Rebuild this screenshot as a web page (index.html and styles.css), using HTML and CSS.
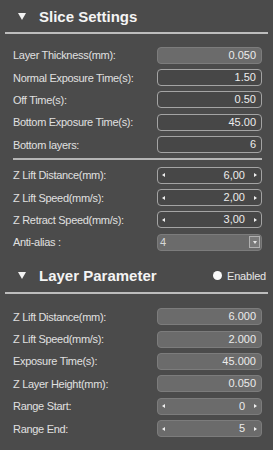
FILE: index.html
```html
<!DOCTYPE html>
<html>
  <head>
    <title>Slice Settings</title>
    <link rel="stylesheet" href="styles.css">
  </head>
  <body>
    <div id="panel">
      <div class="section_head">
        <svg class="caret" width="8" height="7" viewBox="0 0 8 7"><polygon points="0,0 8,0 4,7" fill="#f2f2f2"/></svg>
        <h2>Slice Settings</h2>
      </div>
      <div class="rule"></div>

      <div class="fields first">
        <div class="field"><span class="label">Layer Thickness(mm):</span><div class="box off">0.050</div></div>
        <div class="field"><span class="label">Normal Exposure Time(s):</span><div class="box">1.50</div></div>
        <div class="field"><span class="label">Off Time(s):</span><div class="box">0.50</div></div>
        <div class="field"><span class="label">Bottom Exposure Time(s):</span><div class="box">45.00</div></div>
        <div class="field"><span class="label">Bottom layers:</span><div class="box">6</div></div>
      </div>

      <div class="rule thin"></div>

      <div class="fields">
        <div class="field"><span class="label">Z Lift Distance(mm):</span><div class="box spin"><i class="arrow left"></i><span class="val">6,00</span><i class="arrow right"></i></div></div>
        <div class="field"><span class="label">Z Lift Speed(mm/s):</span><div class="box spin"><i class="arrow left"></i><span class="val">2,00</span><i class="arrow right"></i></div></div>
        <div class="field"><span class="label">Z Retract Speed(mm/s):</span><div class="box spin"><i class="arrow left"></i><span class="val">3,00</span><i class="arrow right"></i></div></div>
        <div class="field"><span class="label">Anti-alias :</span><div class="box off combo"><span class="val">4</span><span class="drop"><i></i></span></div></div>
      </div>

      <div class="section_head second">
        <svg class="caret" width="8" height="7" viewBox="0 0 8 7"><polygon points="0,0 8,0 4,7" fill="#f2f2f2"/></svg>
        <h2>Layer Parameter</h2>
        <span class="radio"><i class="dot"></i>Enabled</span>
      </div>
      <div class="rule"></div>

      <div class="fields last">
        <div class="field"><span class="label">Z Lift Distance(mm):</span><div class="box off">6.000</div></div>
        <div class="field"><span class="label">Z Lift Speed(mm/s):</span><div class="box off">2.000</div></div>
        <div class="field"><span class="label">Exposure Time(s):</span><div class="box off">45.000</div></div>
        <div class="field"><span class="label">Z Layer Height(mm):</span><div class="box off">0.050</div></div>
        <div class="field"><span class="label">Range Start:</span><div class="box off spin"><i class="arrow left"></i><span class="val">0</span><i class="arrow right"></i></div></div>
        <div class="field"><span class="label">Range End:</span><div class="box off spin"><i class="arrow left"></i><span class="val">5</span><i class="arrow right"></i></div></div>
      </div>
    </div>
  </body>
</html>
```

FILE: styles.css
```css
body {
  margin: 0;
  background: #4b4b4b;
  font-family: "Liberation Sans", Arial, sans-serif;
  color: #e2e2e2;
}

#panel {
  height: 450px;
  padding: 0 5px;
  box-sizing: border-box;
}

.section_head {
  height: 32px;
  display: flex;
  align-items: center;
  padding: 0 2px 0 13px;
}

.section_head.second {
  margin-top: 6px;
}

.section_head h2 {
  margin: 0 0 0 13px;
  font-size: 15px;
  font-weight: bold;
  color: #f4f4f4;
  flex: 1;
}

.caret {
  display: block;
}

.radio {
  display: flex;
  align-items: center;
  font-size: 11px;
  letter-spacing: -0.2px;
  color: #e6e6e6;
}

.radio .dot {
  width: 9px;
  height: 9px;
  border-radius: 50%;
  background: #fafafa;
  margin-right: 5px;
}

.rule {
  height: 2px;
  background: #bdbdbd;
}

.rule.thin {
  margin: 2px 6px 4px 8px;
  background: #b5b5b5;
}

.fields.first {
  padding-top: 10px;
}

.fields.last {
  padding-top: 12px;
}

.field {
  height: 22.4px;
  display: flex;
  align-items: center;
  padding: 0 6px 0 8px;
}

.label {
  flex: 1;
  font-size: 11px;
  letter-spacing: -0.3px;
  color: #e0e0e0;
}

.box {
  width: 105px;
  height: 17px;
  box-sizing: border-box;
  border: 1px solid #a4a4a4;
  border-radius: 4px;
  background: #474747;
  font-size: 11px;
  color: #ececec;
  text-align: right;
  padding: 0 5px;
  line-height: 15px;
}

.box.off {
  background: #6b6b6b;
  border-color: #7c7c7c;
}

.spin {
  display: flex;
  align-items: center;
  padding: 0 4px 0 4px;
}

.spin .val {
  flex: 1;
  text-align: right;
  margin-right: 9px;
}

.arrow {
  width: 0;
  height: 0;
  border-top: 2.5px solid transparent;
  border-bottom: 2.5px solid transparent;
}

.arrow.left {
  border-right: 3px solid #f0f0f0;
}

.arrow.right {
  border-left: 3px solid #f0f0f0;
}

.combo {
  display: flex;
  align-items: center;
  padding: 0 1px 0 2px;
  text-align: left;
}

.combo .val {
  flex: 1;
  color: #d8d8d8;
}

.drop {
  width: 11px;
  height: 12px;
  box-sizing: border-box;
  border: 1px solid #b0b0b0;
  background: #7a7a7a;
  position: relative;
}

.drop i {
  position: absolute;
  right: 2px;
  bottom: 3px;
  width: 0;
  height: 0;
  border-left: 2.5px solid transparent;
  border-right: 2.5px solid transparent;
  border-top: 3px solid #e6e6e6;
}
```
